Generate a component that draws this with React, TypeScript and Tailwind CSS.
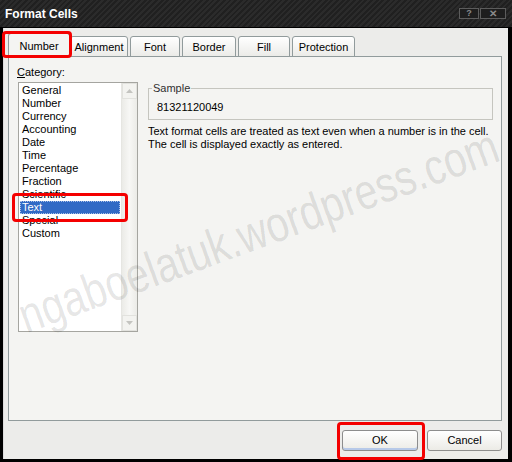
import React from 'react';

const categories = [
  'General',
  'Number',
  'Currency',
  'Accounting',
  'Date',
  'Time',
  'Percentage',
  'Fraction',
  'Scientific',
  'Text',
  'Special',
  'Custom',
];

const tabs = [
  { label: 'Alignment', w: 'w-[58px]', ml: 'ml-0' },
  { label: 'Font', w: 'w-[50px]', ml: 'ml-[2px]' },
  { label: 'Border', w: 'w-[54px]', ml: 'ml-[2px]' },
  { label: 'Fill', w: 'w-[52px]', ml: 'ml-[2px]' },
  { label: 'Protection', w: 'w-[63px]', ml: 'ml-[2px]' },
];

const TitleBar: React.FC = () => (
  <div className="h-[28px] flex justify-between pl-[5px] pr-[6px] border-b border-black bg-[#242424] bg-[repeating-linear-gradient(135deg,#2b2b2b_0px,#2b2b2b_2px,#202020_2px,#202020_4px)]">
    <div className="self-center text-[12px] font-bold text-white leading-none">Format Cells</div>
    <div className="flex gap-[1px] mt-[8px] h-[11px]">
      <div className="w-[20px] h-[11px] border border-[#5c5c5c] bg-[#1e1e1e] flex items-center justify-center text-[9px] font-bold text-[#8a8a8a] leading-none">
        ?
      </div>
      <div className="w-[26px] h-[11px] border border-[#5c5c5c] bg-[#1e1e1e] flex items-center justify-center text-[10px] font-bold text-[#8a8a8a] leading-none">
        ✕
      </div>
    </div>
  </div>
);

const Arrow: React.FC<{ up?: boolean }> = ({ up }) => (
  <div className="h-[16px] border border-[#e2e2de] bg-[#f3f3f0] flex items-center justify-center">
    <svg width="7" height="4" viewBox="0 0 7 4">
      {up ? <path d="M0 4 L3.5 0 L7 4 Z" fill="#c4c4c0" /> : <path d="M0 0 L3.5 4 L7 0 Z" fill="#c4c4c0" />}
    </svg>
  </div>
);

const CategoryList: React.FC = () => (
  <div className="w-[120px] h-[250px] ml-px mt-[3px] border border-[#a5a5a0] bg-white flex">
    <div className="flex-1 pt-[1px] pl-px pr-px">
      {categories.map((c) =>
        c === 'Text' ? (
          <div
            key={c}
            className="h-[13px] leading-[13px] pl-[2px] bg-[#316ac5] text-white outline-1 outline-dotted outline-[#a9c0e8] -outline-offset-1"
          >
            {c}
          </div>
        ) : (
          <div key={c} className="h-[13px] leading-[13px] pl-[2px] text-black">
            {c}
          </div>
        )
      )}
    </div>
    <div className="w-[16px] flex flex-col bg-gradient-to-r from-[#ebebe7] via-[#f7f7f5] to-[#ebebe7] border-l border-[#e6e6e2]">
      <Arrow up />
      <div className="flex-1" />
      <Arrow />
    </div>
  </div>
);

const App: React.FC = () => {
  return (
    <div className="relative w-[512px] h-[462px] bg-black flex flex-col overflow-hidden font-['Liberation_Sans',Arial,sans-serif] text-[11px]">
      <TitleBar />
      <div className="flex-1 ml-[3px] mr-[4px] mb-[3px] bg-[#ececea] flex flex-col border-l border-[#dcdcdc]">
        {/* tabs */}
        <div className="relative z-10 -mb-px pt-[5px] pl-[4px] flex items-end h-[29px]">
          <div className="w-[62px] h-[24px] bg-[#f4f4f2] border-t border-x border-[#919b9c] rounded-t-[3px] flex items-center justify-center pt-[1px] text-black">
            Number
          </div>
          {tabs.map((t) => (
            <div
              key={t.label}
              className={`${t.w} ${t.ml} h-[21px] border border-[#919b9c] rounded-t-[3px] bg-gradient-to-b from-white to-[#ebebe8] flex items-center justify-center pt-[1px] text-black`}
            >
              {t.label}
            </div>
          ))}
        </div>

        {/* panel */}
        <div className="ml-[4px] mr-[6px] h-[365px] border border-[#919b9c] bg-[#f4f4f2] flex pt-[9px] pl-[8px]">
          <div className="flex flex-col">
            <div className="h-[13px] leading-[13px] text-black">
              <span className="underline">C</span>ategory:
            </div>
            <CategoryList />
          </div>
          <div className="ml-[10px] pt-[16px] w-[345px] flex flex-col">
            <fieldset className="h-[38px] border border-[#c5c5bf] px-0 pb-0 pt-0 m-0">
              <legend className="ml-[3px] px-px h-[13px] leading-[13px] text-[#303030]">Sample</legend>
              <div className="pl-[8px] mt-[6px] leading-[13px] text-black">81321120049</div>
            </fieldset>
            <div className="mt-[5px] leading-[13px] text-black">
              <div>Text format cells are treated as text even when a number is in the cell.</div>
              <div>The cell is displayed exactly as entered.</div>
            </div>
          </div>
        </div>

        {/* buttons */}
        <div className="flex justify-end gap-[9px] mt-[9px] mr-[6px]">
          <button className="w-[76px] h-[21px] rounded-[3px] border border-[#8d8d8d] bg-gradient-to-b from-white to-[#ecebe6] text-black shadow-[inset_0_-2px_0_#b7c9e8]">
            OK
          </button>
          <button className="w-[75px] h-[21px] rounded-[3px] border border-[#8d8d8d] bg-gradient-to-b from-white to-[#ecebe6] text-black">
            Cancel
          </button>
        </div>
      </div>

      {/* watermark */}
      <div className="absolute left-[29px] top-[291px] pointer-events-none whitespace-nowrap leading-none text-[50px] text-[rgba(0,0,0,0.11)] origin-bottom-left [transform:rotate(-20deg)_scaleX(0.81)] z-20">
        ngaboelatuk.wordpress.com
      </div>

      {/* red highlight marks */}
      <div className="absolute left-[2px] top-[31px] w-[70px] h-[27px] border-[3px] border-[#f40000] rounded-[4px] z-30 pointer-events-none" />
      <div className="absolute left-[12px] top-[193px] w-[116px] h-[29px] border-[3px] border-[#f40000] rounded-[4px] z-30 pointer-events-none" />
      <div className="absolute left-[337px] top-[422px] w-[88px] h-[38px] border-[3px] border-[#f40000] rounded-[4px] z-30 pointer-events-none" />
    </div>
  );
};

export default App;
